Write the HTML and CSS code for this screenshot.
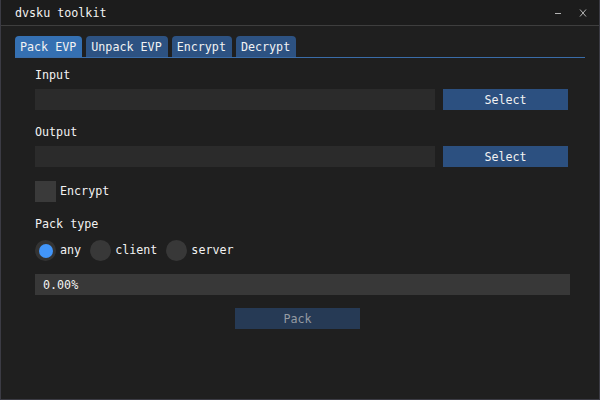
FILE: index.html
```html
<!DOCTYPE html>
<html>
<head>
<meta charset="utf-8">
<link rel="stylesheet" href="styles.css">
</head>
<body>
<div class="window">
  <div class="titlebar">
    <span class="title">dvsku toolkit</span>
    <div class="controls">
      <svg class="ctl-min" width="8" height="8" viewBox="0 0 8 8"><rect x="1" y="4" width="6" height="1" fill="#b4b4b4"/></svg>
      <svg class="ctl-close" width="8" height="8" viewBox="0 0 8 8"><path d="M1 0.5 L7 7.5 M7 0.5 L1 7.5" stroke="#b4b4b4" stroke-width="1"/></svg>
    </div>
  </div>
  <div class="content">
    <div class="tabbar">
      <div class="tab active">Pack EVP</div>
      <div class="tab">Unpack EVP</div>
      <div class="tab">Encrypt</div>
      <div class="tab">Decrypt</div>
    </div>
    <div class="panel">
      <div class="label first">Input</div>
      <div class="row">
        <div class="field"></div>
        <div class="btn">Select</div>
      </div>
      <div class="label">Output</div>
      <div class="row">
        <div class="field"></div>
        <div class="btn">Select</div>
      </div>
      <div class="check-row">
        <div class="checkbox"></div>
        <span class="text">Encrypt</span>
      </div>
      <div class="label packtype">Pack type</div>
      <div class="radio-row">
        <div class="radio selected"><span class="dot"></span></div><span class="text rlabel">any</span>
        <div class="radio"></div><span class="text rlabel">client</span>
        <div class="radio"></div><span class="text rlabel">server</span>
      </div>
      <div class="progress"><span class="text">0.00%</span></div>
      <div class="pack-btn">Pack</div>
    </div>
  </div>
</div>
</body>
</html>
```

FILE: styles.css
```css
* { box-sizing: border-box; }
html, body {
  margin: 0;
  padding: 0;
  background: #1f1f1f;
}
body {
  font-family: "DejaVu Sans Mono", "Liberation Mono", monospace;
  font-size: 11.7px;
  line-height: 13px;
  color: #f2f2f2;
}
.window {
  width: 600px;
  height: 400px;
  background: #1f1f1f;
  border-left: 1px solid #3b3b44;
  border-right: 1px solid #3b3b44;
  border-bottom: 1px solid #3b3b44;
  display: flex;
  flex-direction: column;
}
.titlebar {
  height: 26px;
  background: #1c1c1c;
  border-bottom: 1px solid #3e3e3e;
  display: flex;
  align-items: center;
  padding-left: 14px;
  padding-top: 1px;
}
.title {
  color: #f2f2f2;
}
.controls {
  margin-left: auto;
  margin-right: 12px;
  display: flex;
  align-items: center;
  gap: 17px;
}
.controls svg { display: block; }
.content {
  padding: 0 14px;
}
.tabbar {
  margin-top: 10px;
  display: flex;
  gap: 4px;
  border-bottom: 1px solid #3a6ca8;
}
.tab {
  height: 21px;
  padding: 5px 6px 3px 5px;
  background: #2d5282;
  border-radius: 4px 4px 0 0;
  color: #f2f2f2;
  white-space: nowrap;
}
.tab.active {
  background: #3570b2;
}
.panel {
  padding-left: 20px;
  padding-right: 15px;
}
.label {
  margin-top: 15px;
  height: 13px;
  padding-top: 1px;
  line-height: 12px;
}
.label.first {
  margin-top: 10px;
}
.row {
  margin-top: 8px;
  display: flex;
  gap: 8px;
}
.field {
  width: 400px;
  height: 21px;
  background: #2b2b2b;
}
.btn {
  width: 125px;
  height: 21px;
  background: #2c5080;
  text-align: center;
  padding-top: 5px;
}
.check-row {
  margin-top: 14px;
  display: flex;
  align-items: center;
  gap: 4px;
}
.checkbox {
  width: 21px;
  height: 21px;
  background: #3a3a3a;
}
.label.packtype {
  margin-top: 15px;
}
.radio-row {
  margin-top: 10px;
  display: flex;
  align-items: center;
  height: 21px;
}
.radio {
  width: 21px;
  height: 21px;
  border-radius: 50%;
  background: #383838;
  display: flex;
  align-items: center;
  justify-content: center;
  margin-right: 4px;
}
.radio.selected {
  background: #333333;
}
.dot {
  width: 14px;
  height: 14px;
  border-radius: 50%;
  background: #4296fa;
}
.rlabel {
  margin-right: 9px;
}
.progress {
  margin-top: 13px;
  height: 21px;
  background: #383838;
  padding: 5px 8px 3px;
}
.pack-btn {
  margin-top: 13px;
  margin-left: 200px;
  width: 125px;
  height: 21px;
  background: #263a55;
  color: #959ba3;
  text-align: center;
  padding-top: 5px;
}
```
